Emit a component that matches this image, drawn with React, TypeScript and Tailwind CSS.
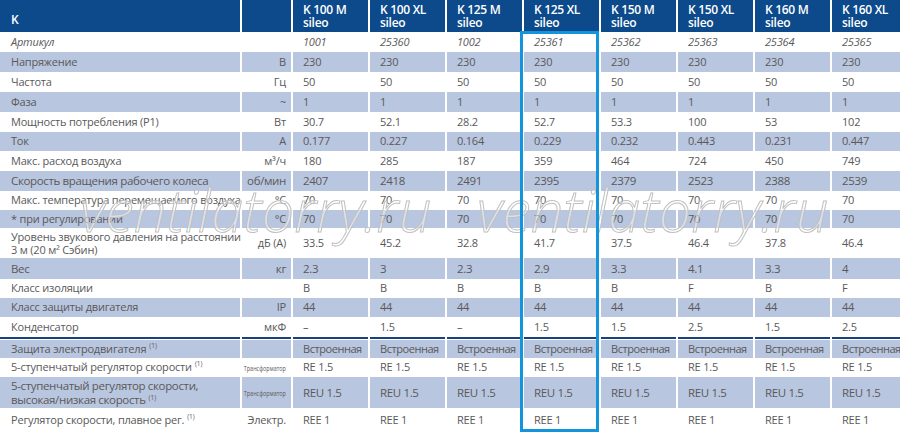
import React from "react";

type Row = {
  label: React.ReactNode;
  unit?: React.ReactNode;
  values: string[];
  blue: boolean;
  h: string;
  big?: boolean;
  italic?: boolean;
  tight?: boolean;
};

const cols = [
  ["K 100 M", "sileo"],
  ["K 100 XL", "sileo"],
  ["K 125 M", "sileo"],
  ["K 125 XL", "sileo"],
  ["K 150 M", "sileo"],
  ["K 150 XL", "sileo"],
  ["K 160 M", "sileo"],
  ["K 160 XL", "sileo"],
];

const Sup = () => <sup className="text-[6.5px] ml-[3px] tracking-normal">(1)</sup>;
const Tiny = ({ t }: { t: string }) => (
  <span className="inline-block origin-right scale-x-[0.68] text-[8px] tracking-normal whitespace-nowrap">{t}</span>
);

const rep = (v: string) => Array(8).fill(v);

const rowsTop: Row[] = [
  { label: "Артикул", values: ["1001", "25360", "1002", "25361", "25362", "25363", "25364", "25365"], blue: false, h: "h-[20px]", italic: true },
  { label: "Напряжение", unit: "В", values: rep("230"), blue: true, h: "h-[20px]" },
  { label: "Частота", unit: "Гц", values: rep("50"), blue: false, h: "h-[20px]" },
  { label: "Фаза", unit: "~", values: rep("1"), blue: true, h: "h-[20px]" },
  { label: "Мощность потребления (P1)", unit: "Вт", values: ["30.7", "52.1", "28.2", "52.7", "53.3", "100", "53", "102"], blue: false, h: "h-[20px]" },
  { label: "Ток", unit: "А", values: ["0.177", "0.227", "0.164", "0.229", "0.232", "0.443", "0.231", "0.447"], blue: true, h: "h-[19px]" },
  { label: "Макс. расход воздуха", unit: "м³/ч", values: ["180", "285", "187", "359", "464", "724", "450", "749"], blue: false, h: "h-[20px]" },
  { label: "Скорость вращения рабочего колеса", unit: "об/мин", values: ["2407", "2418", "2491", "2395", "2379", "2523", "2388", "2539"], blue: true, h: "h-[20px]", big: true },
  { label: "Макс. температура перемещаемого воздуха", unit: "°C", values: rep("70"), blue: false, h: "h-[19px]" },
  { label: "* при регулировании", unit: "°C", values: rep("70"), blue: true, h: "h-[18px]" },
  {
    label: (
      <span className="leading-[13px] block">
        Уровень звукового давления на расстоянии
        <br />3 м (20 м² Сэбин)
      </span>
    ),
    unit: "дБ (А)",
    values: ["33.5", "45.2", "32.8", "41.7", "37.5", "46.4", "37.8", "46.4"],
    blue: false,
    h: "h-[30px]",
  },
  { label: "Вес", unit: "кг", values: ["2.3", "3", "2.3", "2.9", "3.3", "4.1", "3.3", "4"], blue: true, h: "h-[21px]", big: true },
  { label: "Класс изоляции", values: ["B", "B", "B", "B", "B", "F", "B", "F"], blue: false, h: "h-[19px]" },
  { label: "Класс защиты двигателя", unit: "IP", values: rep("44"), blue: true, h: "h-[19px]" },
  { label: "Конденсатор", unit: "мкФ", values: ["–", "1.5", "–", "1.5", "1.5", "2.5", "1.5", "2.5"], blue: false, h: "h-[20px]" },
];

const rowsBottom: Row[] = [
  { label: <>Защита электродвигателя<Sup /></>, values: rep("Встроенная"), blue: true, h: "h-[18px]", tight: true },
  { label: <>5-ступенчатый регулятор скорости<Sup /></>, unit: <Tiny t="Трансформатор" />, values: rep("RE 1.5"), blue: false, h: "h-[19px]" },
  {
    label: (
      <span className="leading-[14px] block">
        5-ступенчатый регулятор скорости,
        <br />
        высокая/низкая скорость<Sup />
      </span>
    ),
    unit: <Tiny t="Трансформатор" />,
    values: rep("REU 1.5"),
    blue: true,
    h: "h-[31px]",
    big: true,
  },
  { label: <>Регулятор скорости, плавное рег.<Sup /></>, unit: "Электр.", values: rep("REE 1"), blue: false, h: "h-[25px]" },
];

const grid = "grid grid-cols-[240px_49px_repeat(8,75px)] gap-x-[2px]";

function TableRow({ r }: { r: Row }) {
  const bg = r.blue ? "bg-[#b9c6df]" : "bg-white";
  const size = r.big ? "text-[11.5px] tracking-[-0.35px]" : "text-[11px] tracking-[-0.2px]";
  return (
    <div className={`${grid} ${r.h} ${size}`}>
      <div className={`${bg} flex items-center pl-[11px] whitespace-nowrap ${r.italic ? "italic" : ""}`}>{r.label}</div>
      <div className={`${bg} flex items-center justify-end pr-[5px] whitespace-nowrap`}>{r.unit}</div>
      {r.values.map((v, i) => (
        <div
          key={i}
          className={`${bg} flex items-center pl-[10px] whitespace-nowrap ${r.italic ? "italic" : ""} ${r.tight ? "tracking-[-0.45px]" : ""}`}
        >
          {v}
        </div>
      ))}
    </div>
  );
}

export default function App() {
  return (
    <div
      className="relative w-[900px] h-[433px] overflow-hidden bg-white text-[#595959]"
      style={{ fontFamily: '"Open Sans", "Noto Sans", sans-serif' }}
    >
      <div className="w-[907px]">
        <div className={`${grid} h-[32px] text-white font-semibold text-[12px] tracking-[-0.3px]`}>
          <div className="bg-[#0c4a8b] pl-[11px] pt-[13px] leading-[13px]">K</div>
          <div className="bg-[#0c4a8b]" />
          {cols.map((c, i) => (
            <div key={i} className="bg-[#0c4a8b] flex flex-col justify-center pl-[10px] leading-[13px] whitespace-nowrap">
              <span>{c[0]}</span>
              <span>{c[1]}</span>
            </div>
          ))}
        </div>
        {rowsTop.map((r, i) => (
          <TableRow key={i} r={r} />
        ))}
        <div className={`${grid} h-[2px]`}>
          {Array.from({ length: 10 }).map((_, i) => (
            <div key={i} className="bg-[#1c427d]" />
          ))}
        </div>
        <div className="h-[1px]" />
        {rowsBottom.map((r, i) => (
          <TableRow key={i} r={r} />
        ))}
      </div>

      <span className="absolute left-[80px] top-[181px] text-[58px] leading-none italic font-light whitespace-nowrap text-[rgba(255,255,255,0.45)] [-webkit-text-stroke:1px_#c0c0c0] pointer-events-none">
        ventilatorry.ru
      </span>
      <span className="absolute left-[477px] top-[181px] text-[58px] leading-none italic font-light whitespace-nowrap text-[rgba(255,255,255,0.45)] [-webkit-text-stroke:1px_#c0c0c0] pointer-events-none">
        ventilatorry.ru
      </span>

      <div className="absolute left-[520px] top-[31px] w-[79px] h-[401px] border-[3px] border-[#1395db] pointer-events-none" />
    </div>
  );
}
